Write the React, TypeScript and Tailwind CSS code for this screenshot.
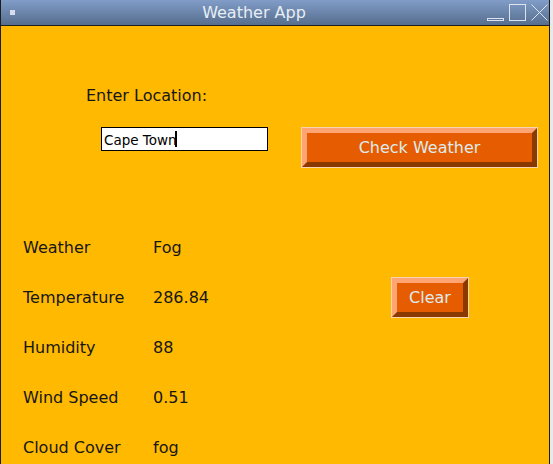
import { useState } from "react";

const font = { fontFamily: '"DejaVu Sans", sans-serif' };

function BevelButton({ label, w }: { label: string; w: string }) {
	return (
		<button type="button" className={`${w} h-[41px] border border-[#f7d3b3] bg-transparent p-0`}>
			<span className="flex h-full w-full items-center justify-center border-[5px] border-t-[#ffa574] border-l-[#ffa574] border-r-[#8a3900] border-b-[#8a3900] bg-[#e65c00] text-[16px] text-[#dcecee]">
				{label}
			</span>
		</button>
	);
}

const rows = [
	["Weather", "Fog"],
	["Temperature", "286.84"],
	["Humidity", "88"],
	["Wind Speed", "0.51"],
	["Cloud Cover", "fog"],
];

export default function App() {
	const [location, setLocation] = useState("Cape Town");

	return (
		<div className="h-[464px] w-[553px] overflow-hidden bg-[#e9e9e9]" style={font}>
			<div className="flex h-[464px] w-[550px] flex-col border-x border-[#1c1c1c]">
				{/* title bar */}
				<div className="flex h-[26px] shrink-0 items-center border-b border-[#202020] bg-gradient-to-b from-[#819dc8] to-[#566e8e]">
					<div className="ml-[9px] h-[5px] w-[5px] bg-[#dadaf0]" />
					<div className="flex-1 pl-[6px] text-center text-[16px] leading-none text-[#e8eef4]">Weather App</div>
					<div className="flex items-center gap-[5px] pr-[1px]">
						<svg width="17" height="17" viewBox="0 0 17 17" className="text-[#dde4ef]">
							<rect x="0.5" y="14.5" width="16" height="2" fill="none" stroke="currentColor" />
						</svg>
						<svg width="17" height="17" viewBox="0 0 17 17" className="text-[#dde4ef]">
							<rect x="0.5" y="0.5" width="16" height="16" fill="none" stroke="currentColor" />
						</svg>
						<svg width="17" height="17" viewBox="0 0 17 17" className="text-[#dde4ef]">
							<path d="M0.5 0.5 L16.5 16.5 M16.5 0.5 L0.5 16.5" stroke="currentColor" strokeWidth="1" />
						</svg>
					</div>
				</div>

				{/* body */}
				<div className="flex flex-1 flex-col bg-[#ffb900] text-[16px] text-[#161616]">
					<div className="ml-[85px] mt-[60px] leading-[20px]">Enter Location:</div>

					<div className="mt-[21px] flex items-start">
						<div className="relative ml-[100px] h-[24px] w-[167px] border border-black bg-white">
							<input
								value={location}
								onChange={(e) => setLocation(e.target.value)}
								className="h-full w-full bg-transparent px-[2px] text-[13.5px] leading-none text-black outline-none caret-transparent"
								style={font}
							/>
							<div className="absolute left-[73px] top-[3px] h-[16px] w-[2px] bg-black" />
						</div>
						<div className="ml-[33px]">
							<BevelButton label="Check Weather" w="w-[237px]" />
						</div>
					</div>

					<div className="mt-[55px] flex pl-[22px]">
						<div className="w-[368px]">
							{rows.map(([k, v]) => (
								<div key={k} className="flex h-[50px] items-center">
									<div className="w-[130px]">{k}</div>
									<div>{v}</div>
								</div>
							))}
						</div>
						<div className="mt-[54px]">
							<BevelButton label="Clear" w="w-[78px]" />
						</div>
					</div>
				</div>
			</div>
		</div>
	);
}
